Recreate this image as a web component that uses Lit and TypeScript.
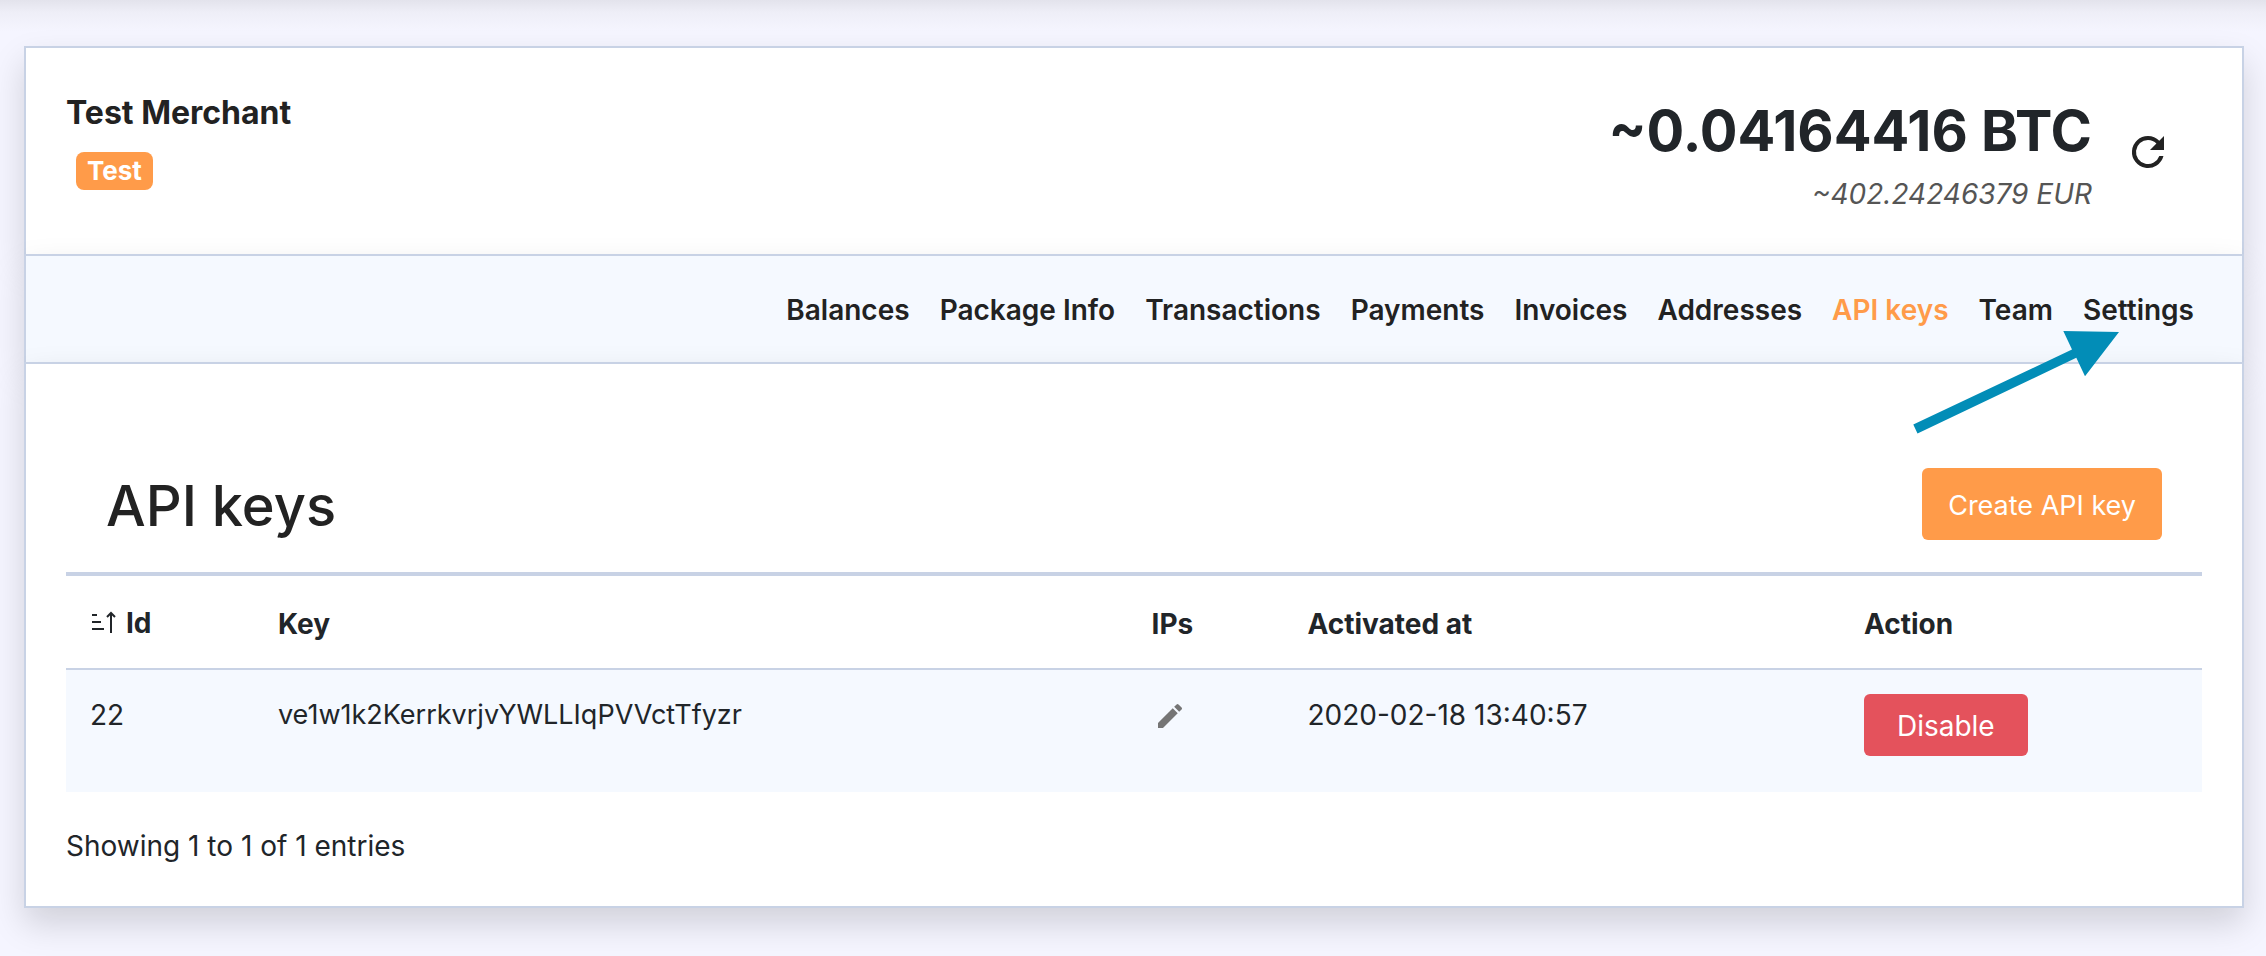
import { LitElement, html, css } from "lit";
import { customElement, property, state } from "lit/decorators.js";
import { classMap } from "lit/directives/class-map.js";

interface ApiKey {
  id: number;
  key: string;
  activatedAt: string;
}

const base = css`
  * {
    box-sizing: border-box;
  }
  button {
    font: inherit;
    color: inherit;
    border: 0;
    margin: 0;
    padding: 0;
    background: none;
    cursor: pointer;
  }
  svg {
    display: block;
    fill: currentColor;
  }
`;

@customElement("merchant-header")
class MerchantHeader extends LitElement {
  @property() name = "";
  @property() mode = "";
  @property() amount = "";
  @property() fiat = "";

  static styles = [
    base,
    css`
      :host {
        display: flex;
        justify-content: space-between;
        padding: 41px 40px 39px;
      }
      .name {
        margin: 0 0 15px;
        font-size: 32px;
        line-height: 48px;
        font-weight: 700;
      }
      .badge {
        width: fit-content;
        margin-left: 10px;
        padding: 0 11px;
        border-radius: 8px;
        background: #ff9b49;
        color: #fff;
        font-size: 26px;
        line-height: 38px;
        font-weight: 700;
      }
      .balance {
        display: flex;
        align-items: center;
        gap: 32px;
        padding-right: 30px;
        text-align: right;
      }
      .amount {
        color: #212529;
        font-size: 56px;
        line-height: 84px;
        font-weight: 700;
      }
      .fiat {
        color: #555;
        font-style: italic;
      }
    `,
  ];

  render() {
    return html`
      <div>
        <h2 class="name">${this.name}</h2>
        <div class="badge">${this.mode}</div>
      </div>
      <div class="balance">
        <div>
          <div class="amount">${this.amount}</div>
          <div class="fiat">${this.fiat}</div>
        </div>
        <button type="button" aria-label="Refresh balance">
          <svg width="48" height="48" viewBox="0 0 24 24">
            <path d="M17.65 6.35A7.96 7.96 0 0 0 12 4a8 8 0 1 0 7.73 10h-2.08A6 6 0 1 1 12 6c1.66 0 3.14.69 4.22 1.78L13 11h7V4z" />
          </svg>
        </button>
      </div>
    `;
  }
}

@customElement("merchant-nav")
class MerchantNav extends LitElement {
  @property({ attribute: false }) items: string[] = [];
  @property() active = "";

  static styles = [
    base,
    css`
      :host {
        display: block;
        padding: 33px 48px 31px;
      }
      .list {
        display: flex;
        justify-content: flex-end;
        flex-wrap: wrap;
        gap: 0 30px;
        margin: 0;
        padding: 0;
        list-style: none;
      }
      .link {
        color: inherit;
        font-weight: 600;
        text-decoration: none;
      }
      .active {
        color: #ff9b49;
      }
    `,
  ];

  render() {
    return html`
      <nav aria-label="Merchant">
        <ul class="list">
          ${this.items.map(
            (item) => html`<li>
              <a class=${classMap({ link: true, active: item === this.active })} href="#">${item}</a>
            </li>`
          )}
        </ul>
      </nav>
    `;
  }
}

@customElement("api-keys-table")
class ApiKeysTable extends LitElement {
  @property({ attribute: false }) rows: ApiKey[] = [];

  static styles = [
    base,
    css`
      :host {
        display: block;
        color: #212529;
      }
      .table {
        width: 100%;
        table-layout: fixed;
        border-collapse: separate;
        border-spacing: 0;
        border-top: 4px solid #c8d2e5;
      }
      .id {
        width: 8.8%;
      }
      .key {
        width: 40.9%;
      }
      .ips {
        width: 7.3%;
      }
      .date {
        width: 26.05%;
      }
      .action {
        width: 16.95%;
      }
      th {
        padding: 26px 24px 22px;
        border-bottom: 2px solid #c8d2e5;
        text-align: left;
        font-weight: 700;
      }
      td {
        padding: 24px;
        background: #f5f9ff;
        vertical-align: top;
      }
      .token {
        font-size: 27px;
      }
      .sort {
        display: flex;
        align-items: center;
        gap: 8px;
        padding-bottom: 2px;
      }
      .edit {
        display: block;
        padding: 6px 2px;
        color: #757575;
      }
      .disable {
        display: block;
        margin-bottom: 12px;
        padding: 11px 33px 9px;
        border-radius: 6px;
        background: #e4525c;
        color: #fff;
      }
      .summary {
        margin: 33px 0 0;
      }
    `,
  ];

  render() {
    return html`
      <table class="table">
        <thead>
          <tr>
            <th class="id" scope="col">
              <button class="sort" type="button">
                <svg width="28" height="28" viewBox="0 0 28 28">
                  <path
                    d="M2 6h5M2 13h9M2 20h12M21 24V5M17 8l4-4 4 4"
                    fill="none"
                    stroke="currentColor"
                    stroke-width="2"
                  />
                </svg>
                Id
              </button>
            </th>
            <th class="key" scope="col">Key</th>
            <th class="ips" scope="col">IPs</th>
            <th class="date" scope="col">Activated at</th>
            <th class="action" scope="col">Action</th>
          </tr>
        </thead>
        <tbody>
          ${this.rows.map(
            (row) => html`<tr>
              <td>${row.id}</td>
              <td class="token">${row.key}</td>
              <td>
                <button class="edit" type="button" aria-label="Edit IPs">
                  <svg width="32" height="32" viewBox="0 0 24 24">
                    <path d="M3 17.25V21h3.75L17.81 9.94l-3.75-3.75zM20.71 7.04a1 1 0 0 0 0-1.41l-2.34-2.34a1 1 0 0 0-1.41 0l-1.83 1.83 3.75 3.75z" />
                  </svg>
                </button>
              </td>
              <td>${row.activatedAt}</td>
              <td><button class="disable" type="button">Disable</button></td>
            </tr>`
          )}
        </tbody>
      </table>
      <p class="summary">Showing 1 to ${this.rows.length} of ${this.rows.length} entries</p>
    `;
  }
}

@customElement("app-root")
class AppRoot extends LitElement {
  @state() private keys: ApiKey[] = [
    { id: 22, key: "ve1w1k2KerrkvrjvYWLLIqPVVctTfyzr", activatedAt: "2020-02-18 13:40:57" },
  ];

  private sections = [
    "Balances",
    "Package Info",
    "Transactions",
    "Payments",
    "Invoices",
    "Addresses",
    "API keys",
    "Team",
    "Settings",
  ];

  static styles = [
    base,
    css`
      :host {
        display: block;
        box-sizing: border-box;
        min-height: 100vh;
        padding: 46px 22px 48px 24px;
        background: linear-gradient(#e3e3ec, #eeeef7 12px, #f5f5ff 32px) #f5f5ff;
        color: #222;
        font: 28px/42px Inter, "Liberation Sans", sans-serif;
      }
      .card {
        position: relative;
      }
      .section {
        border: 2px solid #c8d2e5;
        border-bottom: 0;
        background: #fff;
        box-shadow: 0 16px 32px rgba(0, 0, 0, 0.15);
      }
      .tabs {
        background: #f5f9ff;
      }
      .content {
        padding: 104px 40px 39px;
        border-bottom: 2px solid #c8d2e5;
      }
      .heading {
        display: flex;
        justify-content: space-between;
        align-items: flex-start;
        padding: 0 40px 28px;
      }
      .title {
        margin: 0;
        font-size: 56px;
        line-height: 76px;
        font-weight: 500;
      }
      .create {
        padding: 17px 26px 13px;
        border-radius: 6px;
        background: #ff9b49;
        color: #fff;
        font-size: 27px;
      }
      .pointer {
        position: absolute;
        top: 284px;
        right: 124px;
        fill: #028db7;
        pointer-events: none;
      }
    `,
  ];

  render() {
    return html`
      <main class="card">
        <div class="section">
          <merchant-header
            name="Test Merchant"
            mode="Test"
            amount="~0.04164416 BTC"
            fiat="~402.24246379 EUR"
          ></merchant-header>
        </div>
        <div class="section tabs">
          <merchant-nav .items=${this.sections} active="API keys"></merchant-nav>
        </div>
        <div class="section content">
          <div class="heading">
            <h1 class="title">API keys</h1>
            <button class="create" type="button">Create API key</button>
          </div>
          <api-keys-table .rows=${this.keys}></api-keys-table>
        </div>
        <svg class="pointer" width="208" height="104" viewBox="0 0 208 104" aria-hidden="true">
          <path d="M1.3 94.5 160 19.5 151.3 1 207 2 173 46.3 164.3 27.8 5.5 103.5z" />
        </svg>
      </main>
    `;
  }
}
